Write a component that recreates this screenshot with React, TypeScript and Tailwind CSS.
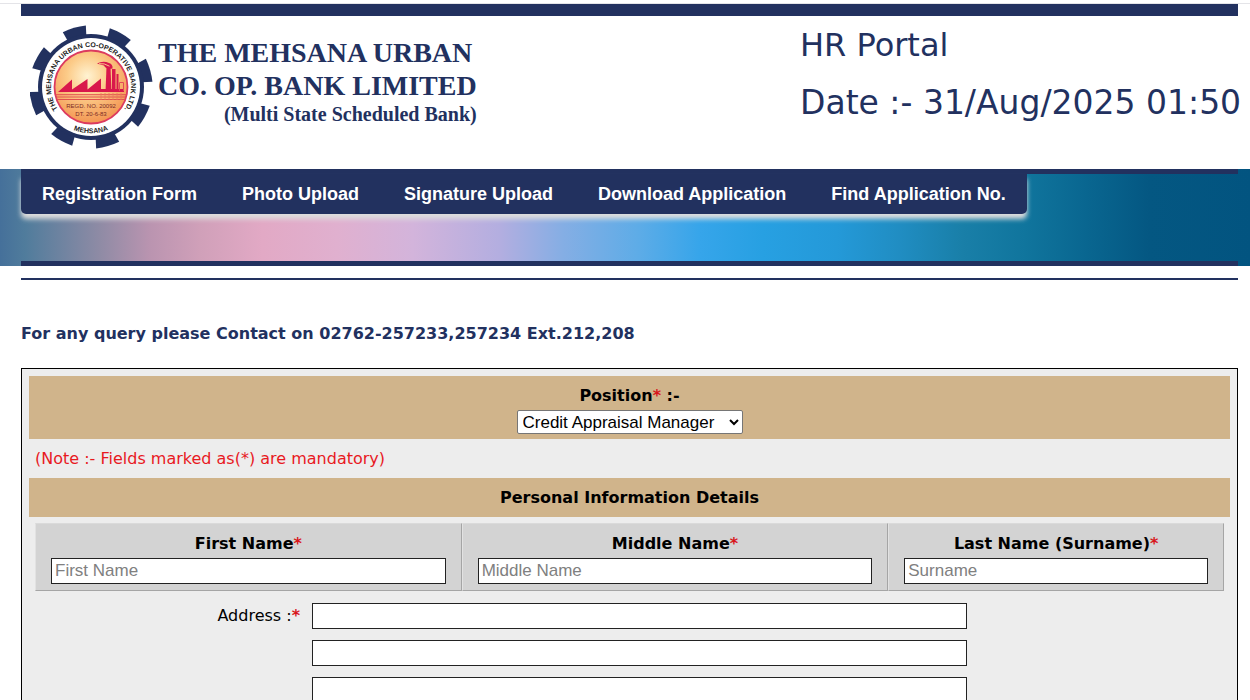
const navItems = [
  "Registration Form",
  "Photo Upload",
  "Signature Upload",
  "Download Application",
  "Find Application No.",
];

const positions = ["Credit Appraisal Manager"];

const nameFields = [
  { id: "first-name", label: "First Name", placeholder: "First Name" },
  { id: "middle-name", label: "Middle Name", placeholder: "Middle Name" },
  { id: "last-name", label: "Last Name (Surname)", placeholder: "Surname" },
];

const gearTeeth = [-16, 29, 74, 119, 164, 209, 254, 299];

function BankLogo() {
  return (
    <svg width="124" height="128" viewBox="0 0 124 128" role="img" aria-label="Mehsana Urban Bank">
      <defs>
        <radialGradient id="sun" cx="0.45" cy="0.35" r="0.7">
          <stop offset="0" stopColor="#fff3d2" />
          <stop offset="0.4" stopColor="#fccb88" />
          <stop offset="1" stopColor="#f28f4c" />
        </radialGradient>
        <path id="ring-top" d="M32.7 91.3 A40 40 0 1 1 89.3 91.3" />
        <path id="ring-bottom" d="M28 95.5 A46.5 46.5 0 0 0 94 95.5" />
      </defs>
      {gearTeeth.map((angle) => (
        <path
          key={angle}
          d="M49 2.5 Q61 0.5 73 2.5 L70.5 13 H51.5 Z"
          fill="#22315f"
          transform={`rotate(${angle} 61 63)`}
        />
      ))}
      <circle cx="61" cy="63" r="53" fill="#22315f" />
      <circle cx="61" cy="63" r="49" fill="#fff" />
      <circle cx="61" cy="63" r="36.5" fill="url(#sun)" stroke="#dc3a5f" strokeWidth="1.8" />
      <g fill="#d9174c">
        <path d="M28 68 L42 55.5 V65.5 L57.5 55 V65.5 L71 54.5 V68 Z" />
        <path d="M75.5 68 L76.5 43 H80.5 L81.5 68 Z" />
        <path d="M82 68 V45 H85.5 V68 Z" />
        <path d="M86.5 68 V50 H88.5 V68 Z" />
        <path d="M71 65 H94 V68 H71 Z" />
        <path d="M67 39.5 Q73 36.5 79 39 Q83 40 82.5 44.5 Q76 45.5 74 41.5 Q70 40.5 67 39.5 Z" />
      </g>
      <path d="M69 39.7 Q74 38.8 79.5 42.2" fill="none" stroke="#fbc488" strokeWidth="1" />
      <path d="M89.5 67 V58.5 H93.5 V67" fill="none" stroke="#e24a58" strokeWidth="1" />
      <path d="M25.5 70.7 H96.5 M26 73 H96 M27 75.5 H95" stroke="#e2504f" strokeWidth="1" />
      <path
        d="M71 69 V76 M75 69 V76 M79 69 V76 M83 69 V76 M87 69 V76 M91 69 V76"
        stroke="#e9785a"
        strokeWidth="0.8"
      />
      <g fontFamily="Liberation Sans, Arial, sans-serif" textAnchor="middle">
        <text x="61" y="83.5" fontSize="6" fill="#7b2b25">
          REGD. NO. 20092
        </text>
        <text x="61" y="91.5" fontSize="6" fill="#7b2b25">
          DT. 20-6-83
        </text>
        <g fontSize="7" fontWeight="700" fill="#1d1d22">
          <text>
            <textPath href="#ring-top" startOffset="50%">
              THE MEHSANA URBAN CO-OPERATIVE BANK LTD.
            </textPath>
          </text>
          <text>
            <textPath href="#ring-bottom" startOffset="50%">
              MEHSANA
            </textPath>
          </text>
        </g>
      </g>
    </svg>
  );
}

function Required() {
  return <span className="font-bold text-[#d8151b]">*</span>;
}

function Header() {
  return (
    <header className="mr-3 ml-[21px] flex min-h-[165px] items-start justify-between border-t-12 border-[#22315f] text-[#22315f]">
      <div className="flex pt-2 pl-[9px]">
        <BankLogo />
        <div className="pt-3 pl-1 font-['Liberation_Serif',serif] font-bold">
          <p className="text-[28px] leading-[33px] whitespace-nowrap">
            THE MEHSANA URBAN
            <br />
            CO. OP. BANK LIMITED
          </p>
          <p className="text-right text-[20px] leading-[24px]">(Multi State Scheduled Bank)</p>
        </div>
      </div>
      <div className="w-[438px] pt-px whitespace-nowrap">
        <p className="text-[32px] leading-[57px]">HR Portal</p>
        <p className="text-[33px] leading-[57px]">Date :- 31/Aug/2025 01:50</p>
      </div>
    </header>
  );
}

function NavBand() {
  return (
    <div className="bg-[linear-gradient(to_right,#45709a_0%,#507c9c_2%,#8f8ba5_8%,#ba94b0_12%,#d0a0b9_16%,#e2a9c5_21%,#e0b0cf_27%,#d3b4db_33%,#b3aee0_40%,#85aee4_45%,#5eace7_51%,#36a5ea_56%,#27a0e2_61%,#2499d8_67%,#208dc2_72%,#197fa8_77%,#10759d_82%,#096690_87%,#045782_92%,#025480_100%)]">
      <div className="mr-3 ml-[21px] min-h-[97px] border-y-5 border-[#22315f]">
        <nav className="flex w-fit gap-[45px] rounded-b-[5px] bg-[#22315f] px-[21px] font-['Liberation_Sans',Arial,sans-serif] text-[18px] leading-10 font-bold whitespace-nowrap text-white shadow-[0_5px_5px_#dddddd]">
          {navItems.map((item) => (
            <a key={item} href="#">
              {item}
            </a>
          ))}
        </nav>
      </div>
    </div>
  );
}

export default function App() {
  return (
    <div className="min-h-screen bg-white font-['DejaVu_Sans',Verdana,sans-serif] text-[16px] leading-6 text-black">
      <div className="h-1 border-b border-[#e4e4e8]" />
      <Header />
      <NavBand />
      <main className="mr-3 ml-[21px]">
        <hr className="mt-3 border-t-2 border-[#22315f]" />
        <p className="mt-[42px] font-bold text-[#22315f]">
          For any query please Contact on 02762-257233,257234 Ext.212,208
        </p>
        <form className="mt-[22px] border border-black bg-[#ededed] p-[7px]">
          <div className="flex flex-col items-center bg-[#d0b48b] pt-2 pb-[5px]">
            <label htmlFor="position" className="font-bold">
              Position
              <Required /> :-
            </label>
            <select
              id="position"
              className="mt-[2px] h-6 w-[226px] rounded-[2px] border border-[#767676] bg-white px-px font-['Liberation_Sans',Arial,sans-serif] text-[17px]"
            >
              {positions.map((position) => (
                <option key={position}>{position}</option>
              ))}
            </select>
          </div>
          <p className="px-[6px] pt-2 pb-[7px] text-[#e8191f]">
            (Note :- Fields marked as(*) are mandatory)
          </p>
          <h2 className="bg-[#d0b48b] pt-2 pb-[7px] text-center font-bold">
            Personal Information Details
          </h2>
          <div className="mx-[6px] mt-[6px] grid grid-cols-[427fr_427fr_336fr]">
            {nameFields.map((field) => (
              <div
                key={field.id}
                className="flex flex-col border border-t-[#dadada] border-r-[#a5a5a5] border-b-[#a5a5a5] border-l-[#e2e2e2] bg-[#d3d3d3] px-[15px] pt-2 pb-[6px] text-center"
              >
                <label htmlFor={field.id} className="font-bold">
                  {field.label}
                  <Required />
                </label>
                <input
                  id={field.id}
                  type="text"
                  placeholder={field.placeholder}
                  className="mt-[2px] h-[26px] w-full border border-[#222] bg-white px-[3px] font-['Liberation_Sans',Arial,sans-serif] text-[17px] placeholder:text-[#808080]"
                />
              </div>
            ))}
          </div>
          <div className="mt-3 grid grid-cols-[271px_minmax(0,655px)] gap-x-3">
            <label htmlFor="address-1" className="pt-px text-right">
              Address :<Required />
            </label>
            <div className="flex flex-col gap-[11px] pb-3">
              {[1, 2, 3].map((line) => (
                <input
                  key={line}
                  id={`address-${line}`}
                  type="text"
                  aria-label={`Address line ${line}`}
                  className="h-[26px] w-full border border-[#222] bg-white px-[3px] font-['Liberation_Sans',Arial,sans-serif] text-[17px]"
                />
              ))}
            </div>
          </div>
        </form>
      </main>
    </div>
  );
}
